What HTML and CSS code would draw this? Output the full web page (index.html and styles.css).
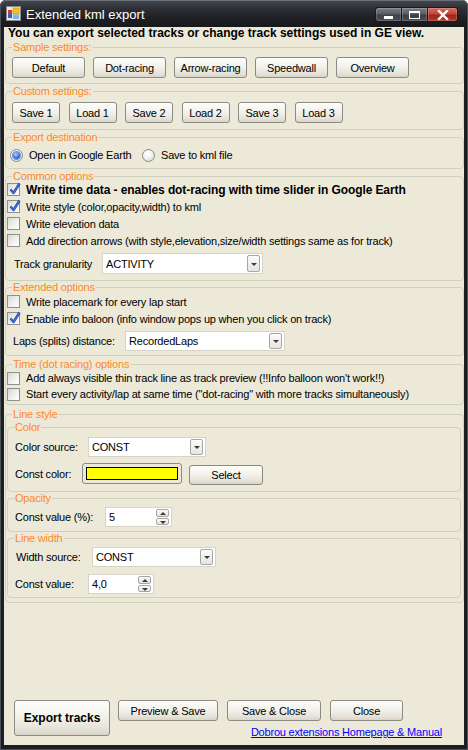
FILE: index.html
```html
<!DOCTYPE html>
<html>
<head>
<meta charset="utf-8">
<link rel="stylesheet" href="styles.css">
</head>
<body>
<div class="window">
  <div class="titlebar">
    <svg class="appicon" width="15" height="15" viewBox="0 0 15 15">
      <rect x="0.5" y="0.5" width="14" height="14" fill="#e9e9e9" stroke="#8c8c8c"/>
      <rect x="7" y="2" width="6" height="6" fill="#f5c21b" stroke="#c98a10" stroke-width="0.6"/>
      <rect x="2" y="4" width="4" height="4" fill="#d9382b"/>
      <rect x="2" y="8" width="4" height="4" fill="#2a62c9"/>
      <rect x="7" y="8.5" width="6" height="4.5" fill="#7db3ea"/>
    </svg>
    <span class="title">Extended kml export</span>
    <div class="capbtns">
      <span class="capbtn cap-min"><span class="glyph-min"></span></span>
      <span class="capbtn cap-max"><span class="glyph-max"></span></span>
      <span class="capbtn cap-close">
        <svg width="12" height="10" viewBox="0 0 12 10"><path d="M2 1 L10 9 M10 1 L2 9" stroke="#fff" stroke-width="2.4" stroke-linecap="square"/></svg>
      </span>
    </div>
  </div>

  <div class="client">
    <p class="intro">You can export selected tracks or change track settings used in GE view.</p>

    <fieldset class="grp g-sample">
      <legend>Sample settings:</legend>
      <div class="btnrow sample-row">
        <span class="btn w-sample">Default</span>
        <span class="btn w-sample">Dot-racing</span>
        <span class="btn w-sample">Arrow-racing</span>
        <span class="btn w-sample">Speedwall</span>
        <span class="btn w-sample">Overview</span>
      </div>
    </fieldset>

    <fieldset class="grp g-custom">
      <legend>Custom settings:</legend>
      <div class="btnrow custom-row">
        <span class="btn w-custom">Save 1</span>
        <span class="btn w-custom">Load 1</span>
        <span class="btn w-custom">Save 2</span>
        <span class="btn w-custom">Load 2</span>
        <span class="btn w-custom">Save 3</span>
        <span class="btn w-custom">Load 3</span>
      </div>
    </fieldset>

    <fieldset class="grp g-dest">
      <legend>Export destination</legend>
      <div class="radiorow">
        <span class="radio checked"></span><span class="rlabel r1">Open in Google Earth</span>
        <span class="radio"></span><span class="rlabel">Save to kml file</span>
      </div>
    </fieldset>

    <fieldset class="grp g-common">
      <legend>Common options</legend>
      <div class="cblist cb17 shift2">
        <div class="cbrow"><span class="cb checked"></span><span class="bold">Write time data - enables dot-racing with time slider in Google Earth</span></div>
        <div class="cbrow"><span class="cb checked"></span><span>Write style (color,opacity,width) to kml</span></div>
        <div class="cbrow"><span class="cb"></span><span>Write elevation data</span></div>
        <div class="cbrow"><span class="cb"></span><span>Add direction arrows (with style,elevation,size/width settings same as for track)</span></div>
      </div>
      <div class="field f-gran">
        <span class="lbl l-gran">Track granularity</span>
        <span class="combo c-gran"><span class="ctext">ACTIVITY</span><span class="dd"></span></span>
      </div>
    </fieldset>

    <fieldset class="grp g-ext">
      <legend>Extended options</legend>
      <div class="cblist cb17 shift1">
        <div class="cbrow"><span class="cb"></span><span>Write placemark for every lap start</span></div>
        <div class="cbrow"><span class="cb checked"></span><span>Enable info baloon (info window pops up when you click on track)</span></div>
      </div>
      <div class="field f-laps">
        <span class="lbl l-laps">Laps (splits) distance:</span>
        <span class="combo c-laps"><span class="ctext">RecordedLaps</span><span class="dd"></span></span>
      </div>
    </fieldset>

    <fieldset class="grp g-time">
      <legend>Time (dot racing) options</legend>
      <div class="cblist cb16 shift1">
        <div class="cbrow"><span class="cb"></span><span>Add always visible thin track line as track preview (!!Info balloon won't work!!)</span></div>
        <div class="cbrow"><span class="cb"></span><span>Start every activity/lap at same time ("dot-racing" with more tracks simultaneously)</span></div>
      </div>
    </fieldset>

    <fieldset class="grp g-line">
      <legend>Line style</legend>

      <fieldset class="grp inner g-color">
        <legend>Color</legend>
        <div class="field f-csrc">
          <span class="lbl l-csrc">Color source:</span>
          <span class="combo c-csrc"><span class="ctext">CONST</span><span class="dd"></span></span>
        </div>
        <div class="field f-ccol">
          <span class="lbl l-ccol">Const color:</span>
          <span class="swatch"><span class="swatch-in"></span></span>
          <span class="btn w-select">Select</span>
        </div>
      </fieldset>

      <fieldset class="grp inner g-opac">
        <legend>Opacity</legend>
        <div class="field f-opac">
          <span class="lbl l-opac">Const value (%):</span>
          <span class="spin s-opac"><span class="ctext">5</span><span class="spinbtns"><span class="sb up"></span><span class="sb down"></span></span></span>
        </div>
      </fieldset>

      <fieldset class="grp inner g-width">
        <legend>Line width</legend>
        <div class="field f-wsrc">
          <span class="lbl l-wsrc">Width source:</span>
          <span class="combo c-wsrc"><span class="ctext">CONST</span><span class="dd"></span></span>
        </div>
        <div class="field f-wval">
          <span class="lbl l-wval">Const value:</span>
          <span class="spin s-wval"><span class="ctext">4,0</span><span class="spinbtns"><span class="sb up"></span><span class="sb down"></span></span></span>
        </div>
      </fieldset>
    </fieldset>

    <div class="footer">
      <span class="btn btn-export">Export tracks</span>
      <div class="footer-right">
        <div class="footer-btns">
          <span class="btn w-preview">Preview &amp; Save</span>
          <span class="btn w-saveclose">Save &amp; Close</span>
          <span class="btn w-close">Close</span>
        </div>
        <a class="homelink" href="#">Dobrou extensions Homepage &amp; Manual</a>
      </div>
    </div>
  </div>
</div>
</body>
</html>
```

FILE: styles.css
```css
* { box-sizing: border-box; }
html, body { margin: 0; padding: 0; background: #ffffff; }
body {
  font-family: "Liberation Sans", Arial, sans-serif;
  font-size: 11px;
  letter-spacing: -0.2px;
  color: #000;
}

.window {
  width: 468px;
  height: 750px;
  display: flex;
  flex-direction: column;
  background: #1d1e21;
  border-radius: 6px 6px 0 0;
  box-shadow: inset 0 0 0 1px #4c5058;
  overflow: hidden;
}

/* ---------- title bar ---------- */
.titlebar {
  height: 27px;
  flex: none;
  display: flex;
  align-items: flex-start;
  background: linear-gradient(#44474e 0%, #2c2e33 35%, #1e1f23 70%, #18191c 100%);
  border-radius: 6px 6px 0 0;
  box-shadow: inset 0 1px 0 #6b6f78, inset 1px 0 0 #4c5058, inset -1px 0 0 #4c5058;
}
.appicon { margin: 6px 0 0 6px; flex: none; }
.title {
  margin: 7px 0 0 5px;
  font-size: 13px;
  line-height: 15px;
  letter-spacing: 0;
  color: #fff;
}
.capbtns {
  margin: 7px 10px 0 auto;
  display: flex;
}
.capbtn {
  height: 15px;
  display: flex;
  align-items: center;
  justify-content: center;
  border: 1px solid #191a1d;
  box-shadow: inset 0 0 0 1px rgba(255,255,255,0.18);
}
.cap-min, .cap-max {
  width: 26px;
  background: linear-gradient(#7a7d85 0%, #5a5d64 45%, #3e4046 55%, #4a4c53 100%);
}
.cap-min { border-radius: 3px 0 0 3px; border-right: none; }
.cap-max { border-right: none; }
.cap-close {
  width: 31px;
  border-radius: 0 3px 3px 0;
  background: linear-gradient(#d66a5e 0%, #c2473a 45%, #a02418 55%, #b33a2c 100%);
}
.glyph-min {
  width: 9px; height: 3px; background: #fff; margin-top: 6px;
}
.glyph-max {
  width: 11px; height: 8px; border: 1px solid #fff; border-top-width: 2px;
}

/* ---------- client ---------- */
.client {
  flex: 1;
  margin: 0 4px 5px 4px;
  background: #ece9d8;
  display: flex;
  flex-direction: column;
}
.intro {
  margin: 0;
  padding: 0 0 2px 4px;
  height: 14px;
  line-height: 12px;
  font-weight: bold;
  font-size: 12px;
  letter-spacing: 0;
  white-space: nowrap;
}

/* ---------- group boxes ---------- */
.grp {
  margin: 0 0 0 1px;
  padding: 0;
  border: 1px solid #d0d0bf;
  border-radius: 4px;
  min-width: 0;
}
.grp > legend {
  margin-left: 6px;
  padding: 0 1px;
  line-height: 13px;
  font-size: 11px;
  color: #fd8a2a;
}
.grp.inner { margin: 0 2px 0 1px; }

.g-sample { margin-top: 0; padding: 3px 0 5px 0; }
.g-custom { margin-top: 1px; padding: 4px 0 6px 0; }
.g-dest   { margin-top: 1px; padding: 3px 0 5px 0; }
.g-common { margin-top: 1px; padding: 0 0 6px 0; }
.g-ext    { margin-top: 0;   padding: 0 0 4px 0; }
.g-time   { margin-top: 2px; padding: 0 0 2px 0; }
.g-line   { margin-top: 3px; padding: 0 0 4px 0; }
.g-color  { margin-top: 0;   padding: 3px 0 7px 0; }
.g-opac   { margin-top: 1px; padding: 2px 0 4px 0; }
.g-width  { margin-top: 2px; padding: 2px 0 3px 0; }

/* ---------- buttons ---------- */
.btn {
  display: inline-flex;
  align-items: center;
  justify-content: center;
  height: 21px;
  border: 1px solid #8b8b84;
  border-radius: 3px;
  background: linear-gradient(#fdfdfb 0%, #f3f2ec 45%, #e6e3da 80%, #d9d5ca 100%);
  box-shadow: inset 0 1px 0 #ffffff;
  font-size: 11px;
  white-space: nowrap;
  flex: none;
}
.btnrow { display: flex; }
.sample-row { padding-left: 6px; gap: 8px; }
.custom-row { padding-left: 6px; gap: 8.5px; }
.w-sample { width: 73px; }
.w-custom { width: 48px; }

/* ---------- radios ---------- */
.radiorow {
  display: flex;
  align-items: center;
  height: 16px;
  padding-left: 4px;
}
.radio {
  width: 13px; height: 13px;
  border-radius: 50%;
  border: 1px solid #8b8d8f;
  background: radial-gradient(circle at 40% 35%, #ffffff 0%, #f1f1ee 45%, #cfd0cc 100%);
  display: inline-flex;
  align-items: center;
  justify-content: center;
  flex: none;
}
.radio.checked::after {
  content: "";
  width: 7px; height: 7px;
  border-radius: 50%;
  background: radial-gradient(circle at 40% 35%, #b7d3ff 0%, #3b78e3 50%, #1e4fb5 100%);
  box-shadow: 0 0 0 1px #6d8fd4;
}
.rlabel { margin-left: 6px; font-size: 11px; }
.rlabel.r1 { width: 113px; flex: none; }

/* ---------- checkboxes ---------- */
.cblist { padding-left: 1px; }
.shift2 { margin-top: -2px; }
.shift1 { margin-top: -1px; }
.cbrow {
  display: flex;
  align-items: center;
  white-space: nowrap;
  font-size: 11px;
}
.cb17 .cbrow { height: 17px; }
.cb16 .cbrow { height: 16px; }
.cb {
  position: relative;
  width: 13px; height: 13px;
  flex: none;
  margin-right: 6px;
  border: 1px solid #8f8f8f;
  background: linear-gradient(135deg, #d9d9d4 0%, #f2f2ef 60%, #ffffff 100%);
}
.cb.checked::after {
  content: "";
  position: absolute;
  left: 1px; top: -2px;
  width: 12px; height: 13px;
  background: url("data:image/svg+xml;utf8,<svg xmlns='http://www.w3.org/2000/svg' width='12' height='13' viewBox='0 0 12 13'><path d='M1.5 7.5 L4.5 11 L10.5 1.5' fill='none' stroke='%23233f9e' stroke-width='2.4' stroke-linejoin='round'/><path d='M1.5 7.5 L4.5 11 L10.5 1.5' fill='none' stroke='%234a7bef' stroke-width='1.1' stroke-linejoin='round'/></svg>") no-repeat;
}
.bold { font-weight: bold; font-size: 12px; letter-spacing: -0.1px; }

/* ---------- fields ---------- */
.field {
  display: flex;
  align-items: center;
  white-space: nowrap;
  font-size: 11px;
}
.lbl { flex: none; }

.combo, .spin {
  position: relative;
  display: flex;
  align-items: center;
  background: #fff;
  border: 1px solid #d7d4c7;
  flex: none;
  font-size: 11px;
}
.ctext { padding-left: 3px; }
.combo .dd {
  position: absolute;
  right: 2px; top: 1px; bottom: 1px;
  width: 13px;
  border: 1px solid #a7a7a2;
  border-radius: 2px;
  background: linear-gradient(#fbfbfa, #e6e5e0);
}
.combo .dd::after {
  content: "";
  position: absolute;
  left: 3px; top: 50%;
  margin-top: -1px;
  border-left: 3px solid transparent;
  border-right: 3px solid transparent;
  border-top: 3px solid #3c3c3c;
}

.f-gran { margin-top: 4px; height: 21px; }
.l-gran { margin-left: 8px; width: 88px; }
.c-gran { width: 161px; height: 21px; }

.f-laps { margin-top: 4px; height: 20px; }
.l-laps { margin-left: 7px; width: 112px; }
.c-laps { width: 160px; height: 20px; }

.f-csrc { height: 20px; }
.l-csrc { margin-left: 7px; width: 73px; }
.c-csrc { width: 118px; height: 20px; }

.f-ccol { margin-top: 6px; height: 21px; }
.l-ccol { margin-left: 7px; width: 67px; }
.swatch {
  width: 100px; height: 21px;
  border: 1px solid #8c8c84;
  border-radius: 3px;
  padding: 3px;
  flex: none;
}
.swatch-in {
  display: block;
  width: 100%; height: 100%;
  background: #ffff00;
  border: 1px solid #000;
}
.w-select { width: 74px; height: 20px; margin-left: 7px; margin-top: 2px; }

.f-opac { height: 20px; }
.l-opac { margin-left: 7px; width: 90px; }
.s-opac { width: 67px; height: 20px; }

.f-wsrc { height: 20px; }
.l-wsrc { margin-left: 8px; width: 76px; }
.c-wsrc { width: 124px; height: 20px; }

.f-wval { margin-top: 7px; height: 20px; }
.l-wval { margin-left: 7px; width: 73px; }
.s-wval { width: 66px; height: 20px; }

.spinbtns {
  position: absolute;
  right: 2px; top: 1px; bottom: 1px;
  width: 13px;
  display: flex;
  flex-direction: column;
  gap: 1px;
}
.sb {
  flex: 1;
  position: relative;
  border: 1px solid #a7a7a2;
  border-radius: 2px;
  background: linear-gradient(#fbfbfa, #e4e3de);
}
.sb::after {
  content: "";
  position: absolute;
  left: 3px; top: 2px;
  border-left: 3px solid transparent;
  border-right: 3px solid transparent;
}
.sb.up::after { border-bottom: 3px solid #3c3c3c; }
.sb.down::after { border-top: 3px solid #3c3c3c; }

/* ---------- footer ---------- */
.footer {
  margin-top: auto;
  display: flex;
  align-items: flex-start;
  padding: 0 0 7px 10px;
}
.btn-export {
  width: 96px; height: 36px;
  font-weight: bold;
  font-size: 12px;
  letter-spacing: 0;
}
.footer-right {
  margin-left: 8px;
  width: 324px;
  display: flex;
  flex-direction: column;
  align-items: flex-start;
}
.footer-btns { display: flex; gap: 9px; }
.w-preview { width: 100px; height: 21px; }
.w-saveclose { width: 94px; height: 21px; }
.w-close { width: 73px; height: 21px; }
.homelink {
  align-self: flex-end;
  margin-top: 5px;
  line-height: 12px;
  font-size: 11px;
  color: #0000ff;
  text-decoration: underline;
}
```
